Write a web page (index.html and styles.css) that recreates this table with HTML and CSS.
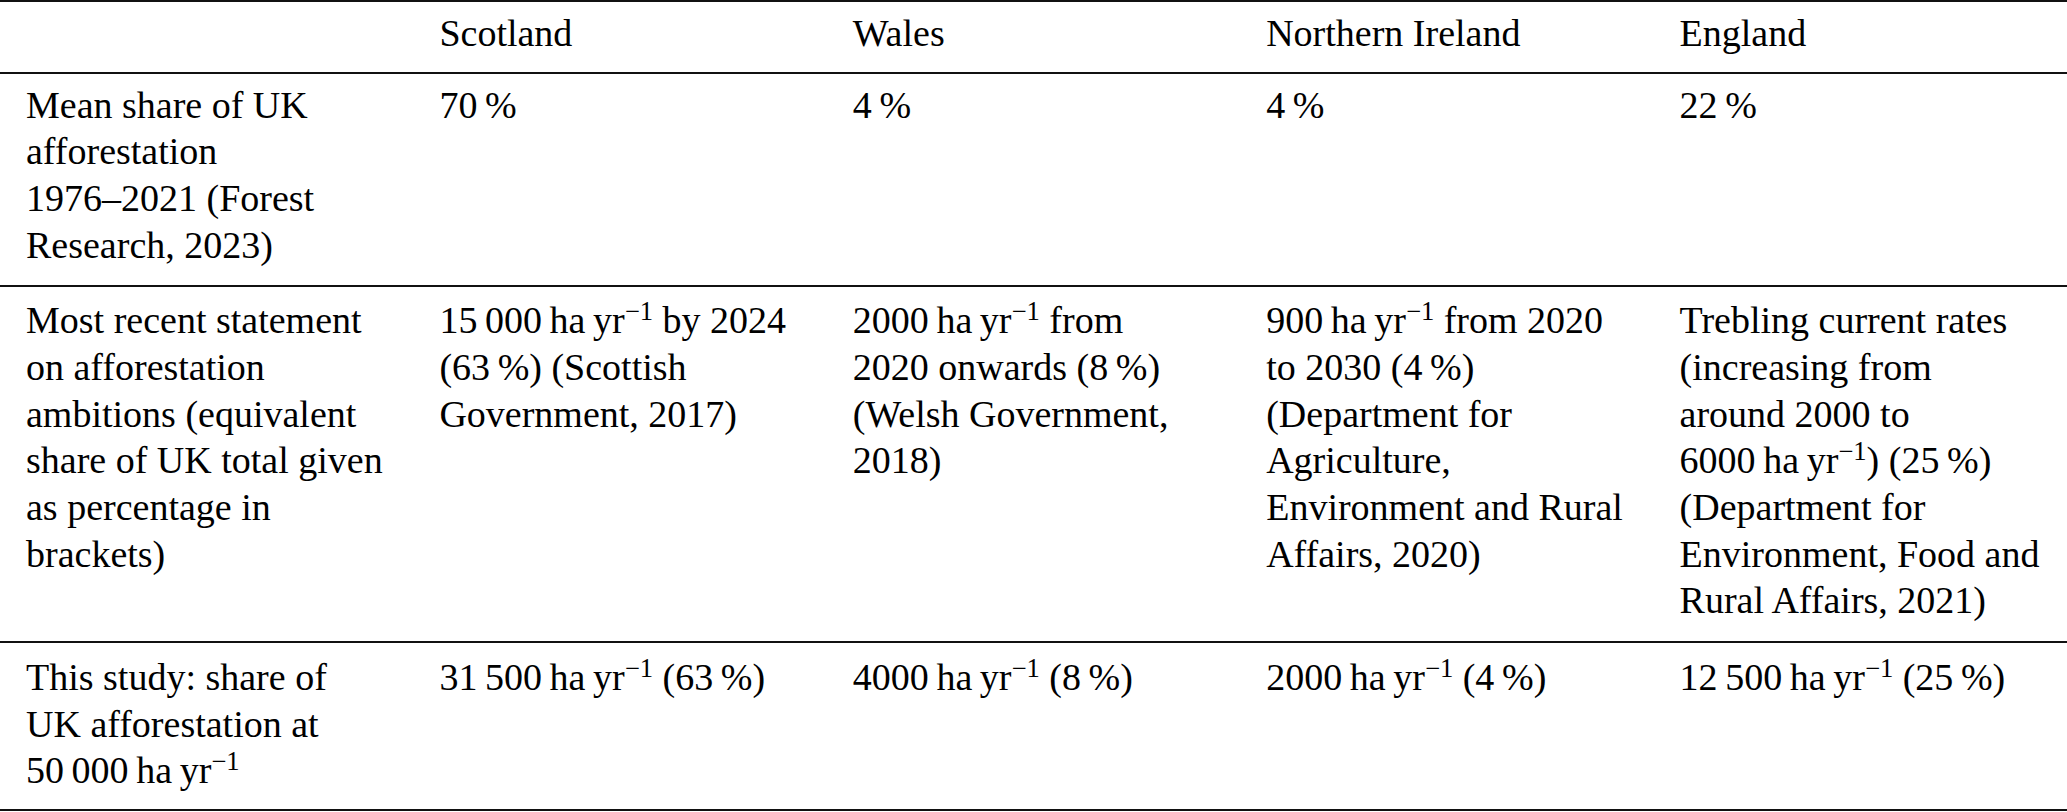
FILE: index.html
```html
<!DOCTYPE html>
<html lang="en">
<head>
<meta charset="utf-8">
<title>UK afforestation shares</title>
<link rel="stylesheet" href="styles.css">
</head>
<body>
<table class="tbl">
  <colgroup><col><col><col><col><col></colgroup>
  <thead>
    <tr class="r-head">
      <th></th>
      <th><span class="ln">Scotland</span></th>
      <th><span class="ln">Wales</span></th>
      <th><span class="ln">Northern Ireland</span></th>
      <th><span class="ln">England</span></th>
    </tr>
  </thead>
  <tbody>
    <tr class="r1">
      <td><span class="ln">Mean share of UK</span><span class="ln">afforestation</span><span class="ln">1976–2021 (Forest</span><span class="ln">Research, 2023)</span></td>
      <td><span class="ln">70&#8201;%</span></td>
      <td><span class="ln">4&#8201;%</span></td>
      <td><span class="ln">4&#8201;%</span></td>
      <td><span class="ln">22&#8201;%</span></td>
    </tr>
    <tr class="r2">
      <td><span class="ln">Most recent statement</span><span class="ln">on afforestation</span><span class="ln">ambitions (equivalent</span><span class="ln">share of UK total given</span><span class="ln">as percentage in</span><span class="ln">brackets)</span></td>
      <td><span class="ln">15&#8201;000&#8201;ha&#8201;yr<sup class="sp">−1</sup> by 2024</span><span class="ln">(63&#8201;%) (Scottish</span><span class="ln">Government, 2017)</span></td>
      <td><span class="ln">2000&#8201;ha&#8201;yr<sup class="sp">−1</sup> from</span><span class="ln">2020 onwards (8&#8201;%)</span><span class="ln">(Welsh Government,</span><span class="ln">2018)</span></td>
      <td><span class="ln">900&#8201;ha&#8201;yr<sup class="sp">−1</sup> from 2020</span><span class="ln">to 2030 (4&#8201;%)</span><span class="ln">(Department for</span><span class="ln">Agriculture,</span><span class="ln">Environment and Rural</span><span class="ln">Affairs, 2020)</span></td>
      <td><span class="ln">Trebling current rates</span><span class="ln">(increasing from</span><span class="ln">around 2000 to</span><span class="ln">6000&#8201;ha&#8201;yr<sup class="sp">−1</sup>) (25&#8201;%)</span><span class="ln">(Department for</span><span class="ln">Environment, Food and</span><span class="ln">Rural Affairs, 2021)</span></td>
    </tr>
    <tr class="r3">
      <td><span class="ln">This study: share of</span><span class="ln">UK afforestation at</span><span class="ln">50&#8201;000&#8201;ha&#8201;yr<sup class="sp">−1</sup></span></td>
      <td><span class="ln">31&#8201;500&#8201;ha&#8201;yr<sup class="sp">−1</sup> (63&#8201;%)</span></td>
      <td><span class="ln">4000&#8201;ha&#8201;yr<sup class="sp">−1</sup> (8&#8201;%)</span></td>
      <td><span class="ln">2000&#8201;ha&#8201;yr<sup class="sp">−1</sup> (4&#8201;%)</span></td>
      <td><span class="ln">12&#8201;500&#8201;ha&#8201;yr<sup class="sp">−1</sup> (25&#8201;%)</span></td>
    </tr>
  </tbody>
</table>
</body>
</html>
```

FILE: styles.css
```css
html, body {
  margin: 0;
  padding: 0;
  background: #ffffff;
}

body {
  font-family: "Liberation Serif", "Times New Roman", serif;
  font-size: 38px;
  line-height: 46.67px;
  color: #000000;
}

.tbl {
  width: 2067px;
  table-layout: fixed;
  border-collapse: collapse;
  border-spacing: 0;
  border-top: 2px solid #111111;
  border-bottom: 2px solid #111111;
}

.tbl col {
  width: 20%;
}

.tbl th,
.tbl td {
  text-align: left;
  vertical-align: top;
  font-weight: normal;
  padding: 9px 0 16px 26px;
}

.tbl thead tr,
.tbl tbody tr {
  border-bottom: 2px solid #111111;
}

.r-head th {
  padding-top: 8px;
  padding-bottom: 15px;
}

.r1 td {
  padding-top: 8px;
  padding-bottom: 17px;
}

.r2 td {
  padding-top: 10px;
  padding-bottom: 17px;
}

.r3 td {
  padding-top: 11px;
  padding-bottom: 15px;
}

.ln {
  display: block;
  white-space: nowrap;
}

.sp {
  font-size: 0.7em;
  line-height: 0;
  vertical-align: 0.5em;
}
```
